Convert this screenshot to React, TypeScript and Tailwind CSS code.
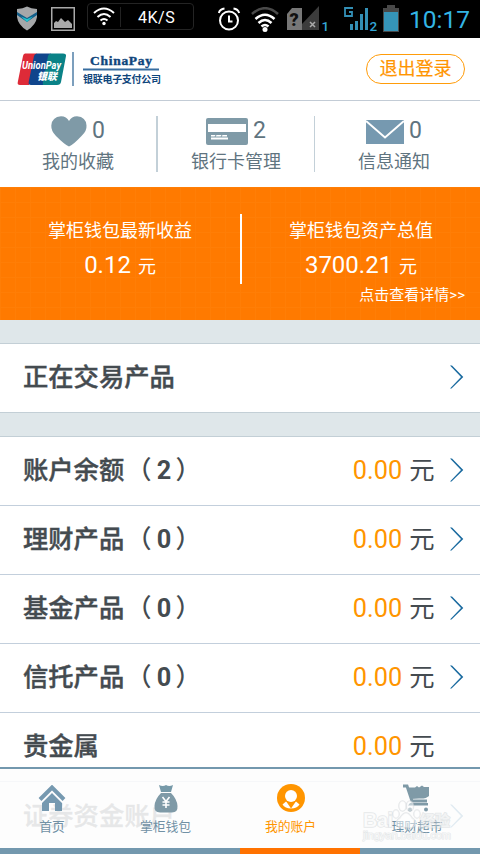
import clsx from 'clsx'

const accounts = [
  { name: '账户余额', count: 2, arrow: true },
  { name: '理财产品', count: 0, arrow: true },
  { name: '基金产品', count: 0, arrow: true },
  { name: '信托产品', count: 0, arrow: true },
  { name: '贵金属', count: null, arrow: false }
]

function StatusBar(): React.JSX.Element {
  return (
    <div className="h-[38px] bg-black flex items-start shrink-0 text-white">
      <svg className="ml-[16px] mt-[6px] shrink-0" width="22" height="25" viewBox="0 0 22 25">
        <path d="M1 3Q7 2.500 11 .5Q15 2.500 21 3V11Q20 19 11 24.500Q2 19 1 11Z" fill="#a5a7a9" />
        <path d="M1 6L11 12L21 6V9L11 16L1 9Z" fill="#125d88" />
        <path d="M5 10.500L11 13L17 10.500L11 16Z" fill="#20c4cf" />
      </svg>
      <svg className="ml-[13px] mt-[7px] shrink-0" width="24" height="24" viewBox="0 0 24 24">
        <rect x=".75" y=".75" width="22.500" height="22.500" fill="none" stroke="#a9a9a9" strokeWidth="1.500" />
        <path d="M3 21V16L5 14L7 15L10 11L14 15L17 13L21 17V21Z" fill="#a9a9a9" />
      </svg>
      <div className="ml-[12px] mt-[3px] w-[107px] h-[27px] border border-[#242424] rounded flex items-center shrink-0">
        <svg className="ml-[5px]" width="22" height="19" viewBox="0 0 22 19" fill="none" stroke="#fff" strokeWidth="2">
          <path d="M1 6Q11 -3 21 6M4.500 10Q11 4 17.500 10M7.500 13.500Q11 10.500 14.500 13.500" />
          <circle cx="11" cy="16.500" r="1.700" fill="#fff" stroke="none" />
        </svg>
        <div className="ml-[5px] w-px h-[20px] bg-[#222]" />
        <span className="ml-[17px] mt-[2px] text-[16px] tracking-[0.5px]">4K/S</span>
      </div>
      <svg className="ml-[24px] mt-[7px] shrink-0" width="24" height="25" viewBox="0 0 24 25" fill="none" stroke="#fff" strokeWidth="2">
        <circle cx="11" cy="13.500" r="9" />
        <path d="M11 8.500V14.500H14.500M.8 6Q2 2 6.500 1.500M21.200 6Q20 2 15.500 1.500" />
      </svg>
      <svg className="ml-[9px] mt-[7px] shrink-0" width="28" height="26" viewBox="0 0 28 26" fill="none" stroke="#fff" strokeWidth="2.600">
        <path d="M1 7Q14 -4.500 27 7" stroke="#4a4a4a" />
        <path d="M4.500 12Q14 3.500 23.500 12M7.500 16Q14 10 20.500 16M10.500 19.500Q14 16.500 17.500 19.500" />
        <circle cx="14" cy="22.500" r="2.500" fill="#fff" stroke="none" />
      </svg>
      {/* SIM 1 */}
      <svg className="ml-[8px] mt-[6px] shrink-0" width="42" height="27" viewBox="0 0 42 27">
        <path d="M0 8L5 2H15V24H0Z" fill="#777" />
        <path d="M15 18L32 0V24H15Z" fill="#3c3c3c" />
        <text x="2.500" y="20" fontSize="18" fontWeight="900" fill="#111">?</text>
        <path d="M23 16L28 21M28 16L23 21" stroke="#aaa" strokeWidth="1.500" />
        <text x="34.500" y="25" fontSize="13.500" fontWeight="500" fill="#33a5d4">1</text>
      </svg>
      {/* SIM 2 */}
      <svg className="ml-[15px] mt-[6px] shrink-0" width="34" height="27" viewBox="0 0 34 27">
        <path d="M9 2H1V10H8V6H5" fill="none" stroke="#338fb5" strokeWidth="1.800" />
        <path d="M6 18H9V24H6ZM11 15H14V24H11ZM16 8H19V24H16ZM21 2H24V24H21Z" fill="#338fb5" />
        <text x="25.500" y="25" fontSize="13.500" fontWeight="500" fill="#33a5d4">2</text>
      </svg>
      <svg className="ml-[5px] mt-[5px] shrink-0" width="16" height="27" viewBox="0 0 16 27">
        <path d="M4 0H12V3H16V27H0V3H4Z" fill="#484848" />
        <rect x="1" y="7" width="14" height="19" fill="#3594b8" />
      </svg>
      <span className="ml-[10px] mt-[4px] text-[24.5px] leading-[31px] text-[#33b5e5]">10:17</span>
    </div>
  )
}

function Logo(): React.JSX.Element {
  return (
    <div className="flex items-center">
      <svg className="overflow-visible" width="50" height="33" viewBox="0 0 50 33">
        <path d="M8 .5H20L12 32H3Q0 32 .8 29L6 3Q6.500 .5 8 .5Z" fill="#de2b38" />
        <path d="M20 .5H34L27 32H14Q11 32 11.700 29L17 3Q17.500 .5 20 .5Z" fill="#10458c" />
        <path d="M34 .5H46Q49.500 .5 49 3L44 29Q43.500 32 40 32H26Q25.500 31 26 29L31 3Q31.500 .5 34 .5Z" fill="#0a8287" />
        <text x="5" y="16" fontSize="10" fontWeight="700" fontStyle="italic" fill="#fff" textLength="39" lengthAdjust="spacingAndGlyphs">UnionPay</text>
        <text x="20" y="26.500" fontSize="10" fontWeight="900" fontStyle="italic" fill="#fff" textLength="20">银联</text>
      </svg>
      <div className="ml-[5px] w-[2px] h-[34px] bg-[#7c9fbd]" />
      <svg className="ml-[9px] overflow-visible" width="78" height="34" viewBox="0 0 78 34">
        <text x="7" y="12.500" fontSize="13.500" fontWeight="700" fill="#10467c" stroke="#10467c" strokeWidth=".4" textLength="62" lengthAdjust="spacing" className="font-['Liberation_Serif',serif]">ChinaPay</text>
        <path d="M0 17.500H76" stroke="#376da0" strokeWidth="2" />
        <text x="0" y="31" fontSize="10" fontWeight="700" fill="#10467c" textLength="78">银联电子支付公司</text>
      </svg>
    </div>
  )
}

function HeartIcon(): React.JSX.Element {
  return (
    <svg width="36" height="31" viewBox="0 0 36 31">
      <path d="M18 30.500Q14 29 5 20Q0 15 .3 9.500Q1 1 10 .3Q15.500 .3 18 5Q20.500 .3 26 .3Q35 1 35.500 9.500Q36 15 30.500 20Q22 29 18 30.500Z" fill="#7f9aa7" />
    </svg>
  )
}

function CardIcon(): React.JSX.Element {
  return (
    <svg width="42" height="27" viewBox="0 0 42 27">
      <rect width="42" height="27" rx="2" fill="#7f9aa7" />
      <path d="M2 6H40V14H2ZM5 17H21V18.500H5ZM5 19.500H22V21.500H5Z" fill="#fff" />
      <path d="M10 17L9 19M16 17L15 19" stroke="#7f9aa7" />
    </svg>
  )
}

function MailIcon(): React.JSX.Element {
  return (
    <svg className="mt-[1px]" width="38" height="24" viewBox="0 0 38 24">
      <rect width="38" height="24" fill="#7699b0" />
      <path d="M0 1L19 17.500L38 1" fill="none" stroke="#fff" strokeWidth="2" />
    </svg>
  )
}

function Shortcut({ icon, count, label }: { icon: React.ReactNode; count: number; label: string }): React.JSX.Element {
  return (
    <div className="w-[156px] flex flex-col items-center text-[#5f7480]">
      <div className="h-[30px] flex items-center justify-center">
        {icon}
        <span className="ml-[5px] text-[23px] leading-[30px]">{count}</span>
      </div>
      <span className="mt-[2px] text-[18px] leading-[28px]">{label}</span>
    </div>
  )
}

function Arrow({ className }: { className?: string }): React.JSX.Element {
  return (
    <svg className={clsx('mb-[2px]', className)} width="14" height="24" viewBox="0 0 14 24" fill="#1a6a9f">
      <path d="M0 .5H2L13.300 12L1.500 23.500H0L11 12Z" />
    </svg>
  )
}

function TabItem({ icon, label, active }: { icon: React.ReactNode; label: string; active?: boolean }): React.JSX.Element {
  return (
    <div className={clsx('flex flex-col items-center text-[12.8px]', active ? 'text-[#ff9500]' : 'text-[#7191a5]')}>
      <div className="h-[30px] flex items-center">{icon}</div>
      <span className="mt-[3px] leading-[22px]">{label}</span>
    </div>
  )
}

function TabBar(): React.JSX.Element {
  return (
    <div className="absolute left-0 bottom-0 w-[480px] h-[87px] border-t-2 border-[#7398ae] bg-[#fdfdfd]/88 flex flex-col">
      <div className="flex-1 grid grid-cols-[104px_123px_127px_126px] pt-[14px]">
        <TabItem
          label="首页"
          icon={
            <svg width="28" height="27" viewBox="0 0 28 27">
              <path d="M2 14.500L14 2.500L26 14.500" fill="none" stroke="#7699b0" strokeWidth="4" />
              <path d="M14 8L24 18V26H17V18H11V26H4V18Z" fill="#7699b0" />
            </svg>
          }
        />
        <TabItem
          label="掌柜钱包"
          icon={
            <svg width="24" height="29" viewBox="0 0 24 29">
              <path d="M5 1Q9 3 12 1Q15 3 19 1L17 8H7Z" fill="#7699a8" />
              <path d="M7 9H17Q23 15 23.500 22Q24 28.500 18 28.500H6Q0 28.500 .5 22Q1 15 7 9Z" fill="#7f9aa7" />
              <path d="M8.500 13L12 17.500L15.500 13M12 17V24M8.500 18H15.500M8.500 21H15.500" fill="none" stroke="#fff" strokeWidth="1.600" />
            </svg>
          }
        />
        <TabItem
          label="我的账户"
          active
          icon={
            <svg width="28" height="28" viewBox="0 0 28 28">
              <circle cx="14" cy="14" r="14" fill="#ff9500" />
              <path d="M9 17.500L5.500 20.500Q8 24.500 14 24.500Q20 24.500 22.500 20.500L19 17.500Z" fill="#fff" />
              <path d="M8.500 16.500H19.500L14 24.500Z" fill="#ff9500" />
              <circle cx="14" cy="12" r="6" fill="#fff" />
            </svg>
          }
        />
        <TabItem
          label="理财超市"
          icon={
            <svg className="-ml-[3px]" width="28" height="28" viewBox="0 0 28 28">
              <path d="M1 2H5L10 17H25" fill="none" stroke="#7f9aa7" strokeWidth="3" />
              <path d="M5 3.500H13L15 2L17 3.500L20 1.500L22 3H27V12Q24 15 17 14.500L9 15ZM8 19H26V21.500H6Z" fill="#7f9aa7" />
              <circle cx="8" cy="25.500" r="2" fill="#7f9aa7" />
              <circle cx="24" cy="25.500" r="2" fill="#7f9aa7" />
            </svg>
          }
        />
      </div>
      <div className="h-[6px] flex bg-[#7398ae]">
        <div className="ml-[240px] w-[120px] bg-[#ff7200]" />
      </div>
    </div>
  )
}

function Watermark(): React.JSX.Element {
  return (
    <svg
      className="absolute left-[360px] top-[798px] font-['Liberation_Sans','Noto_Sans_CJK_SC',sans-serif] [paint-order:stroke]"
      width="94"
      height="46"
      viewBox="0 0 94 46"
      fill="#fff"
      fillOpacity=".7"
      stroke="#c8cdd0"
      strokeOpacity=".45"
      strokeWidth="1.600"
    >
      <text x="3" y="29" fontSize="20" fontWeight="700" textLength="30">Bai</text>
      <g fillOpacity=".5">
        <ellipse cx="36" cy="16" rx="3" ry="4" />
        <ellipse cx="42.500" cy="8" rx="3.500" ry="5" />
        <ellipse cx="50" cy="8" rx="3.500" ry="5" />
        <ellipse cx="57" cy="16" rx="3" ry="4" />
        <path d="M46 15Q49 15 52 20Q58 24 55 28Q52 31 46 29Q40 31 37 28Q34 24 40 20Q43 15 46 15Z" />
      </g>
      <text x="60" y="28" fontSize="15" fontWeight="700" fillOpacity=".5">经验</text>
      <text x="3" y="41" fontSize="11" strokeWidth="1.200" textLength="88">jingyan.baidu.com</text>
    </svg>
  )
}

function App(): React.JSX.Element {
  return (
    <div className="relative w-[480px] h-[854px] overflow-hidden bg-white flex flex-col font-[Roboto,'Noto_Sans_CJK_SC',sans-serif]">
      <StatusBar />

      {/* 顶部标题 */}
      <div className="h-[63px] shrink-0 flex items-center justify-between pl-[17px] pr-[15px] border-b border-[#c3ccd6]">
        <Logo />
        <button className="mt-[-1px] w-[99px] h-[30px] rounded-full border-[1.5px] border-[#ff9c0a] text-[18px] leading-[27px] text-[#ff9500] [-webkit-text-stroke:0.2px]">
          退出登录
        </button>
      </div>

      {/* 快捷入口 */}
      <div className="h-[86px] shrink-0 flex pt-[15px]">
        <Shortcut icon={<HeartIcon />} count={0} label="我的收藏" />
        <div className="w-[2px] h-[56px] bg-[#c3d0d8]" />
        <Shortcut icon={<CardIcon />} count={2} label="银行卡管理" />
        <div className="mr-[1px] w-px h-[56px] bg-[#c3d0d8]" />
        <Shortcut icon={<MailIcon />} count={0} label="信息通知" />
      </div>

      {/* 钱包收益 */}
      <div className="h-[133px] shrink-0 bg-[#ff7a00] bg-[linear-gradient(90deg,#ff7e06_1px,transparent_1px),linear-gradient(#ff7e06_1px,transparent_1px)] bg-[size:15px_15px] text-white">
        <div className="flex pt-[27px]">
          <div className="w-[240px] text-center">
            <div className="mt-[3px] text-[18px] leading-[28px]">掌柜钱包最新收益</div>
            <div className="mt-[3px] text-[24px] leading-[34px]">
              0.12 <span className="ml-[1px] text-[18px]">元</span>
            </div>
          </div>
          <div className="w-[2px] h-[70px] bg-white" />
          <div className="w-[238px] text-center">
            <div className="mt-[3px] text-[18px] leading-[28px]">掌柜钱包资产总值</div>
            <div className="mt-[3px] text-[24px] leading-[34px]">
              3700.21 <span className="ml-[1px] text-[18px]">元</span>
            </div>
          </div>
        </div>
        <div className="pr-[15px] text-right text-[15px] leading-[22px]">点击查看详情&gt;&gt;</div>
      </div>

      <div className="h-[24px] shrink-0 bg-[#dfe7ea] border-b border-[#c3cfd6]" />
      <div className="h-[69px] shrink-0 flex items-center justify-between pl-[23px] pr-[16px] border-b border-[#c3cfd6]">
        <span className="text-[25.3px] font-medium text-[#444b50] [-webkit-text-stroke:0.4px]">正在交易产品</span>
        <Arrow />
      </div>
      <div className="h-[24px] shrink-0 bg-[#dfe7ea] border-b border-[#c3cfd6]" />

      {/* 账户列表 */}
      {accounts.map(({ name, count, arrow }) => (
        <div
          key={name}
          className="h-[69px] shrink-0 flex items-center pl-[23px] pr-[16px] border-b border-[#c3cfdc] text-[25.3px] text-[#444b50]"
        >
          <span className="flex-1 flex items-center font-medium whitespace-nowrap">
            <span className="[-webkit-text-stroke:0.4px]">{name}</span>
            {count !== null && (
              <>
                <span className="ml-[2px]">（</span>
                <b className="ml-[4px] w-[17px] text-center">{count}</b>
                <span className="ml-[3px]">）</span>
              </>
            )}
          </span>
          <span className="text-[#ff9500]">0.00</span>
          <span className="ml-[7px]">元</span>
          <Arrow className={clsx('ml-[15.5px]', !arrow && 'invisible')} />
        </div>
      ))}
      <div className="h-[69px] shrink-0 flex items-center justify-between pl-[23px] pr-[16px] text-[25.3px] text-[#444b50]">
        <span className="font-medium [-webkit-text-stroke:0.4px]">证券资金账户</span>
        <Arrow />
      </div>

      <TabBar />
      <Watermark />
    </div>
  )
}

export default App
